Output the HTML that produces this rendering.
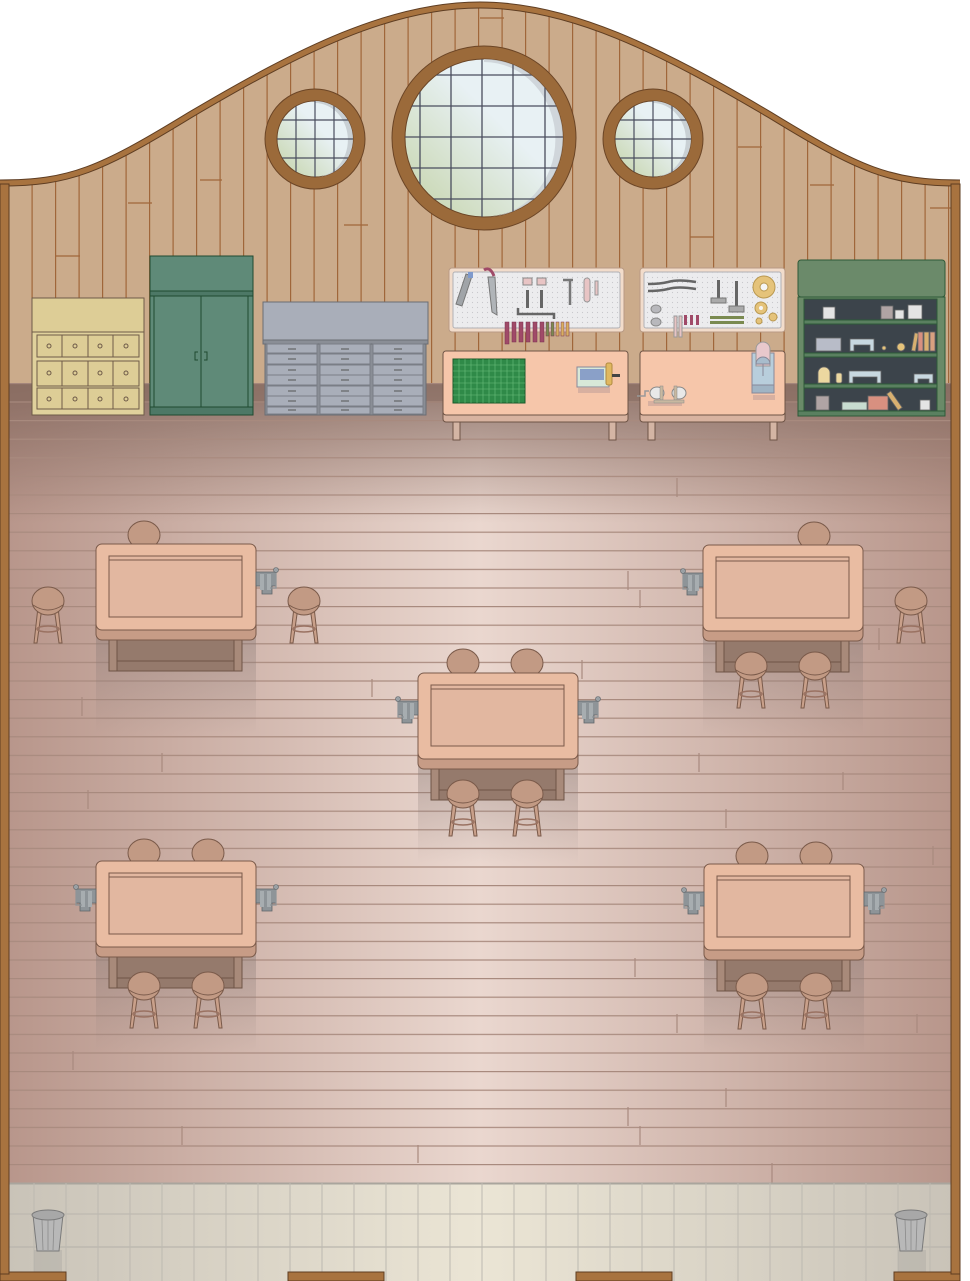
<!DOCTYPE html>
<html><head><meta charset="utf-8"><style>html,body{margin:0;padding:0;background:#fff}svg{display:block}</style></head>
<body>
<svg width="970" height="1281" viewBox="0 0 970 1281" xmlns="http://www.w3.org/2000/svg">
<defs>
<linearGradient id="fl" x1="0" x2="1" y1="0" y2="0"><stop offset="0" stop-color="#b8968b"/><stop offset="0.5" stop-color="#ead7cf"/><stop offset="1" stop-color="#b8968b"/></linearGradient>
<linearGradient id="fltop" x1="0" x2="0" y1="0" y2="1"><stop offset="0" stop-color="#7e6258" stop-opacity="0.8"/><stop offset="1" stop-color="#7e6258" stop-opacity="0"/></linearGradient>
<linearGradient id="tl" x1="0" x2="1"><stop offset="0" stop-color="#c9c3b8"/><stop offset="0.5" stop-color="#ebe5d5"/><stop offset="1" stop-color="#c9c3b8"/></linearGradient>
<linearGradient id="gl" x1="0" y1="1" x2="1" y2="0"><stop offset="0" stop-color="#c4d3a8"/><stop offset="0.6" stop-color="#e8f1f4"/><stop offset="1" stop-color="#e8f1f4"/></linearGradient>
<linearGradient id="sh" x1="0" x2="0" y1="0" y2="1"><stop offset="0" stop-color="#8a7a76" stop-opacity="0.45"/><stop offset="1" stop-color="#8a7a76" stop-opacity="0"/></linearGradient>
<pattern id="fp" width="970" height="18.6" patternUnits="userSpaceOnUse" y="420"><rect width="970" height="1.2" fill="#a88a7e"/></pattern>
<pattern id="wp" width="23.5" height="400" patternUnits="userSpaceOnUse" x="8"><rect width="1.2" height="400" fill="#a0663a"/></pattern>
<pattern id="peg" width="5" height="5" patternUnits="userSpaceOnUse"><circle cx="2.5" cy="2.5" r="0.6" fill="#c8c8cc"/></pattern>
<clipPath id="wallc"><path d="M0,183 C70,183 100,170 190,115 C300,50 390,5 480,5 C570,5 660,50 770,115 C860,170 890,183 960,183 L960,384 L0,384Z"/></clipPath>
<g id="stool">
 <g stroke="#7a5a4a" stroke-width="1" fill="#c9a08a">
 <path d="M-10,8 L-14,44 L-11,44 L-6,8Z"/><path d="M10,8 L14,44 L11,44 L6,8Z"/>
 <ellipse cx="0" cy="30" rx="11" ry="3" fill="none" stroke="#9a7262" stroke-width="1.5"/>
 <ellipse cx="0" cy="2" rx="16" ry="14" fill="#c29a84"/>
 <path d="M-15,6 Q0,16 15,6" fill="none"/>
 </g>
</g>
<g id="seat"><ellipse cx="0" cy="0" rx="16" ry="14" fill="#c29a84" stroke="#7a5a4a"/></g>
<g id="table">
 <rect x="0" y="86" width="160" height="104" fill="url(#sh)"/>
 <rect x="13" y="94" width="133" height="33" fill="#957a6c" stroke="#6e5446"/>
 <rect x="13" y="94" width="8" height="33" fill="#a88a7a" stroke="#6e5446"/>
 <rect x="138" y="94" width="8" height="33" fill="#a88a7a" stroke="#6e5446"/>
 <line x1="21" y1="117" x2="138" y2="117" stroke="#6e5446"/>
 <rect x="0" y="10" width="160" height="86" rx="6" fill="#c79c86" stroke="#7a5a4a"/>
 <rect x="0" y="0" width="160" height="86" rx="6" fill="#e9bca2" stroke="#7a5a4a"/>
 <rect x="13" y="12" width="133" height="61" fill="#e2b7a0" stroke="#7a5a4a"/>
 <line x1="13" y1="16" x2="146" y2="16" stroke="#7a5a4a"/>
</g>
<g id="viseR">
 <path d="M0,28 L0,42 L6,42 L6,50 L16,50 L16,42 L20,42 L20,28Z" fill="#8e9498" stroke="#5e6468" stroke-width="0.8"/>
 <rect x="4" y="30" width="4" height="16" fill="#a7adb0"/><rect x="11" y="30" width="4" height="16" fill="#a7adb0"/>
 <path d="M14,44 L20,44 L20,26" fill="none" stroke="#8e9498" stroke-width="1.2"/>
 <circle cx="20" cy="26" r="2.5" fill="#9aa0a4" stroke="#5e6468" stroke-width="0.6"/>
</g>
<g id="viseL"><use href="#viseR" transform="scale(-1,1)"/></g>
</defs>

<!-- wall -->
<g clip-path="url(#wallc)">
<rect x="0" y="0" width="960" height="384" fill="#cbab8b"/>
<rect x="0" y="0" width="960" height="384" fill="url(#wp)"/>
<g stroke="#a0663a" stroke-width="1.2">
<line x1="32" y1="320" x2="56" y2="320"/><line x1="56" y1="256" x2="80" y2="256"/><line x1="128" y1="203" x2="152" y2="203"/><line x1="200" y1="180" x2="222" y2="180"/><line x1="344" y1="225" x2="368" y2="225"/><line x1="480" y1="18" x2="504" y2="18"/><line x1="690" y1="237" x2="714" y2="237"/><line x1="738" y1="147" x2="762" y2="147"/><line x1="810" y1="185" x2="834" y2="185"/><line x1="930" y1="208" x2="952" y2="208"/><line x1="170" y1="258" x2="194" y2="258"/>
</g>
</g>
<path d="M0,183 C70,183 100,170 190,115 C300,50 390,5 480,5 C570,5 660,50 770,115 C860,170 890,183 960,183" fill="none" stroke="#5e3d22" stroke-width="7"/>
<path d="M0,183 C70,183 100,170 190,115 C300,50 390,5 480,5 C570,5 660,50 770,115 C860,170 890,183 960,183" fill="none" stroke="#a8733f" stroke-width="5"/>

<!-- windows -->
<g>
<circle cx="484" cy="138" r="92" fill="#9b6a3a" stroke="#6b4526"/>
<circle cx="484" cy="138" r="79" fill="url(#gl)" stroke="#6b4526"/>
<path d="M484,59 A79,79 0 0 1 484,217 A70,76 0 0 0 484,62Z" fill="#c9d0d4" opacity="0.8"/>
<g stroke="#4a4e5e" stroke-width="1.3" clip-path="url(#cw1)">
</g>
<clipPath id="cw1"><circle cx="484" cy="138" r="79"/></clipPath>
<g stroke="#4a4e5e" stroke-width="1.3" clip-path="url(#cw1)">
<line x1="420" y1="0" x2="420" y2="300"/><line x1="451" y1="0" x2="451" y2="300"/><line x1="482" y1="0" x2="482" y2="300"/><line x1="513" y1="0" x2="513" y2="300"/><line x1="545" y1="0" x2="545" y2="300"/>
<line x1="380" y1="75" x2="600" y2="75"/><line x1="380" y1="106" x2="600" y2="106"/><line x1="380" y1="137" x2="600" y2="137"/><line x1="380" y1="168" x2="600" y2="168"/><line x1="380" y1="199" x2="600" y2="199"/>
</g>
<clipPath id="cw2"><circle cx="315" cy="139" r="38"/></clipPath>
<clipPath id="cw3"><circle cx="653" cy="139" r="38"/></clipPath>
<circle cx="315" cy="139" r="50" fill="#9b6a3a" stroke="#6b4526"/>
<circle cx="315" cy="139" r="38" fill="url(#gl)" stroke="#6b4526"/>
<path d="M315,101 A38,38 0 0 1 315,177 A32,36 0 0 0 315,103Z" fill="#c9d0d4"/>
<g stroke="#4a4e5e" stroke-width="1.2" clip-path="url(#cw2)"><line x1="296" y1="90" x2="296" y2="190"/><line x1="315" y1="90" x2="315" y2="190"/><line x1="334" y1="90" x2="334" y2="190"/><line x1="270" y1="120" x2="360" y2="120"/><line x1="270" y1="139" x2="360" y2="139"/><line x1="270" y1="158" x2="360" y2="158"/></g>
<circle cx="653" cy="139" r="50" fill="#9b6a3a" stroke="#6b4526"/>
<circle cx="653" cy="139" r="38" fill="url(#gl)" stroke="#6b4526"/>
<path d="M653,101 A38,38 0 0 1 653,177 A32,36 0 0 0 653,103Z" fill="#c9d0d4"/>
<g stroke="#4a4e5e" stroke-width="1.2" clip-path="url(#cw3)"><line x1="634" y1="90" x2="634" y2="190"/><line x1="653" y1="90" x2="653" y2="190"/><line x1="672" y1="90" x2="672" y2="190"/><line x1="600" y1="120" x2="700" y2="120"/><line x1="600" y1="139" x2="700" y2="139"/><line x1="600" y1="158" x2="700" y2="158"/></g>
</g>

<!-- floor -->
<rect x="8" y="383" width="944" height="800" fill="url(#fl)"/>
<rect x="8" y="383" width="944" height="140" fill="url(#fltop)"/>
<rect x="8" y="383" width="944" height="20" fill="#8a6e62" opacity="0.6"/>
<rect x="8" y="383" width="944" height="800" fill="url(#fp)"/>
<g stroke="#a88a7e" stroke-width="1.2">
<line x1="677" y1="478" x2="677" y2="497"/><line x1="628" y1="571" x2="628" y2="590"/><line x1="640" y1="590" x2="640" y2="608"/><line x1="582" y1="660" x2="582" y2="679"/><line x1="372" y1="679" x2="372" y2="697"/><line x1="82" y1="697" x2="82" y2="716"/><line x1="162" y1="753" x2="162" y2="772"/><line x1="699" y1="753" x2="699" y2="772"/><line x1="843" y1="772" x2="843" y2="790"/><line x1="88" y1="790" x2="88" y2="809"/><line x1="726" y1="809" x2="726" y2="828"/><line x1="933" y1="846" x2="933" y2="865"/><line x1="635" y1="958" x2="635" y2="977"/><line x1="677" y1="1014" x2="677" y2="1033"/><line x1="917" y1="1014" x2="917" y2="1033"/><line x1="73" y1="1051" x2="73" y2="1070"/><line x1="726" y1="1088" x2="726" y2="1107"/><line x1="628" y1="1107" x2="628" y2="1126"/><line x1="182" y1="1126" x2="182" y2="1145"/><line x1="640" y1="1126" x2="640" y2="1145"/><line x1="418" y1="1145" x2="418" y2="1163"/><line x1="772" y1="1163" x2="772" y2="1183"/><line x1="879" y1="628" x2="879" y2="650"/></g>

<!-- tiles -->
<rect x="8" y="1183" width="944" height="98" fill="url(#tl)"/>
<g stroke="#b9b5ad" stroke-width="1">
<line x1="8" y1="1183.5" x2="952" y2="1183.5" stroke="#a9a59d" stroke-width="2"/>
<line x1="8" y1="1214" x2="952" y2="1214"/><line x1="8" y1="1247" x2="952" y2="1247" stroke-width="2" opacity="0.6"/>
</g>
<g stroke="#bdb9b1" stroke-width="1">
<line x1="34" y1="1183" x2="34" y2="1281"/><line x1="66" y1="1183" x2="66" y2="1281"/><line x1="98" y1="1183" x2="98" y2="1281"/><line x1="130" y1="1183" x2="130" y2="1281"/><line x1="162" y1="1183" x2="162" y2="1281"/><line x1="194" y1="1183" x2="194" y2="1281"/><line x1="226" y1="1183" x2="226" y2="1281"/><line x1="258" y1="1183" x2="258" y2="1281"/><line x1="290" y1="1183" x2="290" y2="1281"/><line x1="322" y1="1183" x2="322" y2="1281"/><line x1="354" y1="1183" x2="354" y2="1281"/><line x1="386" y1="1183" x2="386" y2="1281"/><line x1="418" y1="1183" x2="418" y2="1281"/><line x1="450" y1="1183" x2="450" y2="1281"/><line x1="482" y1="1183" x2="482" y2="1281"/><line x1="514" y1="1183" x2="514" y2="1281"/><line x1="546" y1="1183" x2="546" y2="1281"/><line x1="578" y1="1183" x2="578" y2="1281"/><line x1="610" y1="1183" x2="610" y2="1281"/><line x1="642" y1="1183" x2="642" y2="1281"/><line x1="674" y1="1183" x2="674" y2="1281"/><line x1="706" y1="1183" x2="706" y2="1281"/><line x1="738" y1="1183" x2="738" y2="1281"/><line x1="770" y1="1183" x2="770" y2="1281"/><line x1="802" y1="1183" x2="802" y2="1281"/><line x1="834" y1="1183" x2="834" y2="1281"/><line x1="866" y1="1183" x2="866" y2="1281"/><line x1="898" y1="1183" x2="898" y2="1281"/><line x1="930" y1="1183" x2="930" y2="1281"/></g>
<!-- bins -->
<g>
<rect x="34" y="1250" width="28" height="25" fill="#a9a7a3" opacity="0.4"/>
<path d="M33,1215 L37,1251 L59,1251 L63,1215Z" fill="#b8b8b8" stroke="#7a7a7a"/>
<ellipse cx="48" cy="1215" rx="16" ry="5" fill="#a8a8a8" stroke="#7a7a7a"/>
<g stroke="#8a8a8a" stroke-width="0.8"><line x1="42" y1="1220" x2="43" y2="1250"/><line x1="48" y1="1220" x2="48" y2="1250"/><line x1="54" y1="1220" x2="53" y2="1250"/></g>
<rect x="898" y="1250" width="28" height="25" fill="#a9a7a3" opacity="0.4"/>
<path d="M896,1215 L900,1251 L922,1251 L926,1215Z" fill="#b8b8b8" stroke="#7a7a7a"/>
<ellipse cx="911" cy="1215" rx="16" ry="5" fill="#a8a8a8" stroke="#7a7a7a"/>
<g stroke="#8a8a8a" stroke-width="0.8"><line x1="905" y1="1220" x2="906" y2="1250"/><line x1="911" y1="1220" x2="911" y2="1250"/><line x1="917" y1="1220" x2="916" y2="1250"/></g>
</g>
<!-- door thresholds -->
<g fill="#a8733f" stroke="#5e3d22"><rect x="0" y="1272" width="66" height="9"/><rect x="288" y="1272" width="96" height="9"/><rect x="576" y="1272" width="96" height="9"/><rect x="894" y="1272" width="66" height="9"/></g>
<!-- side posts -->
<rect x="0" y="184" width="9" height="1090" fill="#a8733f" stroke="#5e3d22"/>
<rect x="951" y="184" width="9" height="1090" fill="#a8733f" stroke="#5e3d22"/>

<!-- cream drawer -->
<g stroke="#6e5a48">
<rect x="32" y="298" width="112" height="34" fill="#ddcd96"/>
<rect x="32" y="332" width="112" height="83" fill="#e0d19c"/>
<g fill="#ddcd96">
<rect x="37" y="335" width="25" height="22"/><rect x="62" y="335" width="26" height="22"/><rect x="88" y="335" width="25" height="22"/><rect x="113" y="335" width="26" height="22"/>
<rect x="37" y="361" width="25" height="25"/><rect x="62" y="361" width="26" height="25"/><rect x="88" y="361" width="25" height="25"/><rect x="113" y="361" width="26" height="25"/>
<rect x="37" y="388" width="25" height="21"/><rect x="62" y="388" width="26" height="21"/><rect x="88" y="388" width="25" height="21"/><rect x="113" y="388" width="26" height="21"/>
</g>
<g fill="none"><circle cx="49" cy="346" r="2"/><circle cx="75" cy="346" r="2"/><circle cx="100" cy="346" r="2"/><circle cx="126" cy="346" r="2"/><circle cx="49" cy="373" r="2"/><circle cx="75" cy="373" r="2"/><circle cx="100" cy="373" r="2"/><circle cx="126" cy="373" r="2"/><circle cx="49" cy="399" r="2"/><circle cx="75" cy="399" r="2"/><circle cx="100" cy="399" r="2"/><circle cx="126" cy="399" r="2"/></g>
</g>
<!-- green cabinet -->
<g stroke="#1f4a30">
<rect x="150" y="256" width="103" height="159" fill="#5f8a78"/>
<rect x="150" y="291" width="103" height="5" fill="#4d7866"/>
<rect x="154" y="296" width="94" height="111" fill="#5f8a78"/>
<line x1="201" y1="296" x2="201" y2="407"/>
<rect x="150" y="407" width="103" height="8" fill="#4d7866"/>
<path d="M198,352 h-3 v8 h3 M204,352 h3 v8 h-3" fill="none"/>
</g>
<!-- grey drawers -->
<g stroke="#6a6d74">
<rect x="263" y="302" width="165" height="38" fill="#a9aeb9"/>
<rect x="263" y="340" width="165" height="4" fill="#8a8e96"/>
<rect x="265" y="344" width="161" height="71" fill="#8a8e96"/>
</g>
<g fill="#a9aeb9" stroke="#7a7e86">
<rect x="267" y="344" width="50" height="9"/><rect x="320" y="344" width="50" height="9"/><rect x="373" y="344" width="50" height="9"/>
<rect x="267" y="354" width="50" height="10"/><rect x="320" y="354" width="50" height="10"/><rect x="373" y="354" width="50" height="10"/>
<rect x="267" y="365" width="50" height="10"/><rect x="320" y="365" width="50" height="10"/><rect x="373" y="365" width="50" height="10"/>
<rect x="267" y="375" width="50" height="10"/><rect x="320" y="375" width="50" height="10"/><rect x="373" y="375" width="50" height="10"/>
<rect x="267" y="386" width="50" height="10"/><rect x="320" y="386" width="50" height="10"/><rect x="373" y="386" width="50" height="10"/>
<rect x="267" y="396" width="50" height="10"/><rect x="320" y="396" width="50" height="10"/><rect x="373" y="396" width="50" height="10"/>
<rect x="267" y="407" width="50" height="7"/><rect x="320" y="407" width="50" height="7"/><rect x="373" y="407" width="50" height="7"/>
</g>
<g stroke="#555" stroke-width="1"><line x1="288" y1="349" x2="296" y2="349"/><line x1="341" y1="349" x2="349" y2="349"/><line x1="394" y1="349" x2="402" y2="349"/><line x1="288" y1="359" x2="296" y2="359"/><line x1="341" y1="359" x2="349" y2="359"/><line x1="394" y1="359" x2="402" y2="359"/><line x1="288" y1="370" x2="296" y2="370"/><line x1="341" y1="370" x2="349" y2="370"/><line x1="394" y1="370" x2="402" y2="370"/><line x1="288" y1="380" x2="296" y2="380"/><line x1="341" y1="380" x2="349" y2="380"/><line x1="394" y1="380" x2="402" y2="380"/><line x1="288" y1="391" x2="296" y2="391"/><line x1="341" y1="391" x2="349" y2="391"/><line x1="394" y1="391" x2="402" y2="391"/><line x1="288" y1="401" x2="296" y2="401"/><line x1="341" y1="401" x2="349" y2="401"/><line x1="394" y1="401" x2="402" y2="401"/><line x1="288" y1="410" x2="296" y2="410"/><line x1="341" y1="410" x2="349" y2="410"/><line x1="394" y1="410" x2="402" y2="410"/></g>

<!-- pegboards -->
<rect x="449" y="268" width="175" height="64" rx="3" fill="#f2dccb" stroke="#b89a84"/>
<rect x="453" y="272" width="167" height="56" rx="2" fill="#ececee" stroke="#b0b0b4"/>
<rect x="453" y="272" width="167" height="56" fill="url(#peg)"/>
<rect x="640" y="268" width="145" height="64" rx="3" fill="#f2dccb" stroke="#b89a84"/>
<rect x="644" y="272" width="137" height="56" rx="2" fill="#ececee" stroke="#b0b0b4"/>
<rect x="644" y="272" width="137" height="56" fill="url(#peg)"/>
<!-- tools board1 -->
<path d="M466,274 l6,2 l-10,30 l-6,-2Z" fill="#a0a4a8" stroke="#777"/>
<rect x="468" y="272" width="5" height="6" fill="#7f9acc"/>
<path d="M488,277 l7,0 l2,38 l-5,-3Z" fill="#b0b4b8" stroke="#777"/>
<path d="M484,270 q6,-4 10,6" fill="none" stroke="#a04a68" stroke-width="3"/>
<rect x="523" y="278" width="9" height="7" fill="#e8c4c4" stroke="#888"/><rect x="537" y="278" width="9" height="7" fill="#e8c4c4" stroke="#888"/>
<rect x="526" y="290" width="3" height="18" fill="#666"/><rect x="540" y="290" width="3" height="18" fill="#666"/>
<path d="M518,308 v6 h36 v5" fill="none" stroke="#666" stroke-width="2.5"/>
<path d="M563,280 h10 M570,280 v25" stroke="#777" stroke-width="2.5" fill="none"/>
<rect x="584" y="278" width="6" height="24" rx="3" fill="#e8c4c4" stroke="#999"/><rect x="595" y="281" width="3" height="14" fill="#e8c4c4" stroke="#999"/>
<g stroke="#7a3050" stroke-width="0.5"><rect x="505" y="322" width="4" height="22" fill="#a04a68"/><rect x="512" y="322" width="4" height="20" fill="#a04a68"/><rect x="519" y="322" width="4" height="20" fill="#a04a68"/><rect x="526" y="322" width="4" height="20" fill="#a04a68"/><rect x="533" y="322" width="4" height="20" fill="#a04a68"/><rect x="540" y="322" width="4" height="20" fill="#a04a68"/><rect x="546" y="322" width="3" height="14" fill="#7a8a50"/><rect x="551" y="322" width="3" height="14" fill="#7a8a50"/><rect x="556" y="322" width="3" height="14" fill="#d8b060"/><rect x="561" y="322" width="3" height="14" fill="#d8b060"/><rect x="566" y="322" width="3" height="14" fill="#d8b060"/></g>
<!-- tools board2 -->
<path d="M648,284 q12,0 20,-2 q10,-3 28,0 M648,291 q12,0 20,-2 q10,-3 28,0" stroke="#666" stroke-width="2.5" fill="none"/>
<ellipse cx="656" cy="309" rx="5" ry="4" fill="#b8b8bc" stroke="#888"/><ellipse cx="656" cy="322" rx="5" ry="4" fill="#b8b8bc" stroke="#888"/>
<rect x="674" y="316" width="3" height="21" fill="#e8c4c4" stroke="#999"/><rect x="679" y="316" width="3" height="21" fill="#e8c4c4" stroke="#999"/>
<rect x="684" y="315" width="3" height="10" fill="#a04a68"/><rect x="690" y="315" width="3" height="10" fill="#a04a68"/><rect x="696" y="315" width="3" height="10" fill="#a04a68"/>
<rect x="717" y="280" width="3" height="18" fill="#666"/><rect x="711" y="298" width="15" height="5" fill="#aaa" stroke="#777"/>
<rect x="735" y="281" width="3" height="25" fill="#666"/><rect x="729" y="306" width="15" height="6" fill="#aaa" stroke="#777"/>
<rect x="710" y="316" width="34" height="3" fill="#7a8a50"/><rect x="710" y="321" width="34" height="3" fill="#7a8a50"/>
<circle cx="764" cy="287" r="11" fill="#e5c37a" stroke="#b99850"/><circle cx="764" cy="287" r="4" fill="#f5f5f5" stroke="#b99850"/>
<circle cx="761" cy="308" r="6" fill="#e5c37a" stroke="#b99850"/><circle cx="761" cy="308" r="2" fill="#f5f5f5"/>
<circle cx="773" cy="317" r="4" fill="#e5c37a" stroke="#b99850"/><circle cx="759" cy="321" r="3" fill="#e5c37a" stroke="#b99850"/>

<!-- benches -->
<g stroke="#6e5446">
<rect x="453" y="418" width="7" height="22" fill="#d4b5a4"/><rect x="609" y="418" width="7" height="22" fill="#d4b5a4"/>
<rect x="443" y="406" width="185" height="16" rx="3" fill="#d8b3a0"/>
<rect x="443" y="351" width="185" height="64" rx="3" fill="#f6c6aa"/>
<rect x="648" y="418" width="7" height="22" fill="#d4b5a4"/><rect x="770" y="418" width="7" height="22" fill="#d4b5a4"/>
<rect x="640" y="406" width="145" height="16" rx="3" fill="#d8b3a0"/>
<rect x="640" y="351" width="145" height="64" rx="3" fill="#f6c6aa"/>
</g>
<rect x="453" y="359" width="72" height="44" fill="#2f8a48" stroke="#1a5a2a"/>
<g stroke="#7acc8a" stroke-width="0.6" opacity="0.8">
<line x1="459" y1="359" x2="459" y2="403"/><line x1="465" y1="359" x2="465" y2="403"/><line x1="471" y1="359" x2="471" y2="403"/><line x1="477" y1="359" x2="477" y2="403"/><line x1="483" y1="359" x2="483" y2="403"/><line x1="489" y1="359" x2="489" y2="403"/><line x1="495" y1="359" x2="495" y2="403"/><line x1="501" y1="359" x2="501" y2="403"/><line x1="507" y1="359" x2="507" y2="403"/><line x1="513" y1="359" x2="513" y2="403"/><line x1="519" y1="359" x2="519" y2="403"/>
<line x1="453" y1="365" x2="525" y2="365"/><line x1="453" y1="371" x2="525" y2="371"/><line x1="453" y1="377" x2="525" y2="377"/><line x1="453" y1="383" x2="525" y2="383"/><line x1="453" y1="389" x2="525" y2="389"/><line x1="453" y1="395" x2="525" y2="395"/></g>
<rect x="578" y="388" width="32" height="5" fill="#d8b0a0"/>
<rect x="577" y="367" width="32" height="20" fill="#d8e8d8" stroke="#889"/><rect x="580" y="369" width="24" height="11" fill="#8aa0c8"/>
<rect x="606" y="363" width="6" height="22" rx="2" fill="#e0b860" stroke="#b08a40"/><rect x="612" y="374" width="8" height="3" fill="#444"/>
<rect x="648" y="401" width="34" height="5" fill="#d8b0a0"/>
<path d="M637,396 h8 v-5 h4" fill="none" stroke="#999" stroke-width="1.5"/>
<ellipse cx="657" cy="393" rx="7" ry="6" fill="#e8e8e8" stroke="#888"/><ellipse cx="679" cy="393" rx="7" ry="6" fill="#e8e8e8" stroke="#888"/>
<rect x="660" y="386" width="3" height="14" fill="#c8b8a0" stroke="#888" stroke-width="0.5"/><rect x="674" y="386" width="3" height="14" fill="#c8b8a0" stroke="#888" stroke-width="0.5"/><rect x="654" y="400" width="30" height="3" fill="#c8b8a0" stroke="#888" stroke-width="0.5"/>
<rect x="753" y="395" width="22" height="5" fill="#d8b0a0"/>
<rect x="752" y="353" width="22" height="40" fill="#b8cedc" stroke="#889"/>
<rect x="752" y="385" width="22" height="8" fill="#a0b4c4" stroke="#889"/>
<path d="M756,366 v-17 a7,7 0 0 1 14,0 v17Z" fill="#e8c8cc" stroke="#999"/>
<path d="M756,364 a7,7 0 0 1 14,0Z" fill="#a8bccc" stroke="#889"/><line x1="763" y1="364" x2="763" y2="376" stroke="#889"/>

<!-- green shelf -->
<g stroke="#2d5a38">
<rect x="798" y="297" width="147" height="118" fill="#6a8a68"/>
<rect x="804" y="299" width="133" height="112" fill="#3c444b"/>
<rect x="798" y="260" width="147" height="37" rx="3" fill="#6b8a6a"/>
<rect x="804" y="320" width="133" height="4" fill="#5a8060"/><rect x="804" y="353" width="133" height="4" fill="#5a8060"/><rect x="804" y="384" width="133" height="4" fill="#5a8060"/>
<rect x="798" y="411" width="147" height="5" fill="#5a8060"/>
</g>
<g stroke="#666" stroke-width="0.8">
<rect x="823" y="307" width="12" height="12" fill="#e4e4e4"/><rect x="881" y="306" width="12" height="13" fill="#b0a4a4"/><rect x="895" y="310" width="9" height="9" fill="#e4e4e4"/><rect x="908" y="305" width="14" height="14" fill="#e4e4e4"/>
<rect x="816" y="338" width="25" height="13" fill="#b8bcc8"/><path d="M850,351 v-12 h24 v12 h-4 v-6 h-16 v6Z" fill="#c8d8e0"/><circle cx="884" cy="348" r="2" fill="#e5c37a"/><circle cx="901" cy="347" r="4" fill="#e5c37a"/>
<rect x="913" y="333" width="4" height="18" fill="#d8b070" transform="rotate(10 915 342)"/><rect x="918" y="332" width="5" height="19" fill="#d89080"/><rect x="924" y="332" width="5" height="19" fill="#d8b070"/><rect x="930" y="332" width="5" height="19" fill="#d8a080"/>
<path d="M818,383 v-10 a6,6 0 0 1 12,0 v10Z" fill="#ecd8a0"/><rect x="836" y="373" width="6" height="10" rx="2" fill="#ecd8a0"/>
<path d="M849,383 v-12 h32 v12 h-4 v-6 h-24 v6Z" fill="#c8d8e0"/><path d="M914,383 v-9 h19 v9 h-4 v-4 h-11 v4Z" fill="#c8d8e0"/>
<rect x="816" y="396" width="13" height="14" fill="#b0a4a4"/><rect x="842" y="402" width="25" height="8" fill="#c8dcd0"/><rect x="868" y="396" width="20" height="14" fill="#d89080"/>
<rect x="892" y="391" width="5" height="20" fill="#d8b070" transform="rotate(-35 894 401)"/><rect x="920" y="400" width="10" height="10" fill="#e4e4e4"/>
</g>

<!-- classroom tables -->
<!-- T1 -->
<use href="#seat" x="144" y="535"/>
<use href="#table" x="96" y="544"/>
<use href="#viseR" x="256" y="544"/>
<use href="#stool" x="48" y="599"/>
<use href="#stool" x="304" y="599"/>
<!-- T2 -->
<use href="#seat" x="814" y="536"/>
<use href="#table" x="703" y="545"/>
<use href="#viseL" x="703" y="545"/>
<use href="#stool" x="911" y="599"/>
<use href="#stool" x="751" y="664"/>
<use href="#stool" x="815" y="664"/>
<!-- T3 -->
<use href="#seat" x="463" y="663"/>
<use href="#seat" x="527" y="663"/>
<use href="#table" x="418" y="673"/>
<use href="#viseL" x="418" y="673"/>
<use href="#viseR" x="578" y="673"/>
<use href="#stool" x="463" y="792"/>
<use href="#stool" x="527" y="792"/>
<!-- T4 -->
<use href="#seat" x="144" y="853"/>
<use href="#seat" x="208" y="853"/>
<use href="#table" x="96" y="861"/>
<use href="#viseL" x="96" y="861"/>
<use href="#viseR" x="256" y="861"/>
<use href="#stool" x="144" y="984"/>
<use href="#stool" x="208" y="984"/>
<!-- T5 -->
<use href="#seat" x="752" y="856"/>
<use href="#seat" x="816" y="856"/>
<use href="#table" x="704" y="864"/>
<use href="#viseL" x="704" y="864"/>
<use href="#viseR" x="864" y="864"/>
<use href="#stool" x="752" y="985"/>
<use href="#stool" x="816" y="985"/>
</svg>
</body></html>
